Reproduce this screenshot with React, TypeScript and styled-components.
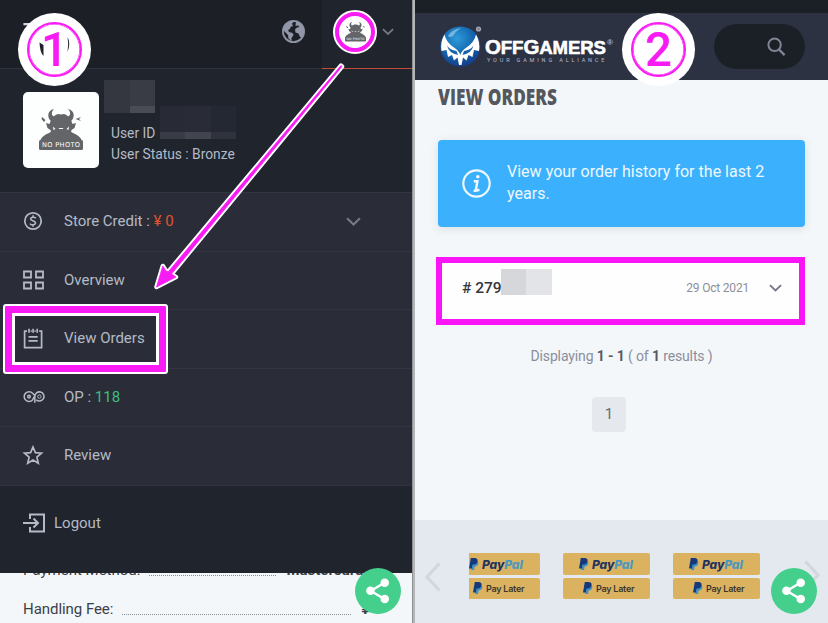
import React from "react";
import styled, { createGlobalStyle } from "styled-components";

const Global = createGlobalStyle`
  * { box-sizing: border-box; }
  body { margin: 0; font-family: Roboto, "Liberation Sans", sans-serif; overflow: hidden; }
  svg { display: block; flex: none; }
`;

const Stage = styled.div`
  position: relative;
  display: flex;
  width: 828px;
  height: 623px;
  overflow: hidden;
  background: #f4f7f9;
`;
const MenuPanel = styled.section`
  width: 412px;
  height: 623px;
  display: flex;
  flex-direction: column;
  background: #20242d;
  color: #b4bac6;
  overflow: hidden;
`;
const Divider = styled.div`
  width: 3px;
  background: linear-gradient(90deg, #77787c, #b4b5b7 40%, #b4b5b7);
`;
const OrdersPanel = styled.section`
  width: 413px;
  display: flex;
  flex-direction: column;
  background: #f4f7f9;
`;

/* ---------- account menu ---------- */
const MenuHeader = styled.header`
  height: 69px;
  flex: none;
  display: flex;
  justify-content: flex-end;
  background: #1c2026;
  border-bottom: 1px solid #2f333b;
`;
const MenuLetter = styled.span`
  margin: 19px auto 0 23px;
  font-size: 20px;
  font-weight: 700;
  color: #d5d7db;
`;
const GlobeSlot = styled.div`
  padding: 19px 16px 0 0;
`;
const AccountTab = styled.div`
  width: 90px;
  height: 69px;
  background: #20242d;
  border-bottom: 1.5px solid #c14e38;
  display: flex;
  align-items: flex-start;
`;
const AvatarRing = styled.div`
  width: 44px;
  height: 44px;
  margin: 10px 5px 0 11px;
  border-radius: 50%;
  border: 2px solid #fff;
  background: #f91bf3;
  padding: 4px;
`;
const AvatarDisc = styled.div`
  width: 32px;
  height: 32px;
  border-radius: 50%;
  background: #fff;
  display: flex;
  align-items: center;
  justify-content: center;
`;
const TabArrow = styled.div`
  margin-top: 28px;
`;
const Profile = styled.div`
  height: 123px;
  flex: none;
  display: flex;
  padding: 11px 0 0 23px;
`;
const PhotoCard = styled.div`
  width: 76px;
  height: 76px;
  margin-top: 12px;
  border-radius: 5px;
  background: #fdfefe;
  padding: 17px 0 0 16px;
`;
const ProfileText = styled.div`
  margin-left: 5px;
`;
const Mosaic = styled.div<{ $cols: string; $rows: string }>`
  display: inline-grid;
  grid-template-columns: ${(p) => p.$cols};
  grid-template-rows: ${(p) => p.$rows};
`;
const Tile = styled.span<{ $c: string }>`
  background: ${(p) => p.$c};
`;
const UserLine = styled.div`
  display: flex;
  height: 33px;
  margin: -7px 0 0 7px;
`;
const Label = styled.span<{ $size?: number; $ls?: number }>`
  font-size: ${(p) => p.$size ?? 15}px;
  letter-spacing: ${(p) => p.$ls ?? 0}px;
  line-height: 20px;
  white-space: nowrap;
`;
const UserIdLabel = styled(Label)`
  margin-top: 17px;
  width: 49px;
`;
const UserStatus = styled.div`
  margin: 5px 0 0 7px;
  line-height: 20px;
`;
const MenuRow = styled.div`
  height: 58.5px;
  flex: none;
  display: flex;
  align-items: center;
  padding: 0 51px 1px 22px;
  background: #2a2d38;
  border-top: 1px solid #313541;
`;
const RowIcon = styled.div`
  width: 42px;
`;
const Spacer = styled.div`
  flex: 1;
`;
const Red = styled.span`
  color: #e2512f;
`;
const Green = styled.span`
  color: #3fbd80;
`;
const LogoutRow = styled.div`
  height: 88px;
  flex: none;
  display: flex;
  align-items: center;
  padding: 0 0 12px 23px;
  gap: 8px;
  border-top: 1px solid #303440;
`;
const Receipt = styled.div`
  flex: 1;
  background: #f4f7f9;
  color: #3b3f48;
  padding: 0 0 0 23px;
  overflow: hidden;
`;
const ReceiptRow = styled.div<{ $gap: string }>`
  display: flex;
  align-items: flex-end;
  height: 20px;
  margin-top: ${(p) => p.$gap};
`;
const Leader = styled.span<{ $w: number; $ml: number }>`
  width: ${(p) => p.$w}px;
  flex: none;
  margin: 0 10px 4px ${(p) => p.$ml}px;
  border-bottom: 1px dotted #8b9097;
`;

/* ---------- orders page ---------- */
const StatusBar = styled.div`
  height: 13px;
  flex: none;
  background: #1b2026;
`;
const BrandBar = styled.header`
  height: 67px;
  flex: none;
  display: flex;
  align-items: flex-start;
  background: #2d3243;
  padding: 11px 23px 0 25px;
`;
const BrandText = styled.div`
  margin: 13px 0 0 2px;
  width: 132px;
  color: #fff;
  white-space: nowrap;
`;
const BrandName = styled.div`
  font-family: "Liberation Sans", sans-serif;
  font-weight: 700;
  font-size: 18.6px;
  line-height: 20px;
  height: 20px;
  display: flex;
  align-items: baseline;
  letter-spacing: -0.1px;
  -webkit-text-stroke: 0.6px #fff;
`;
const BigCap = styled.span`
  font-size: 20.5px;
`;
const Reg = styled.span`
  font-size: 8px;
  margin-left: 1px;
  align-self: flex-start;
  line-height: 11px;
  color: #b7bcc8;
  -webkit-text-stroke: 0;
`;
const Tagline = styled.div`
  margin-left: 2px;
  font-size: 5.5px;
  letter-spacing: 2.85px;
  line-height: 7px;
  color: #b7bcc8;
`;
const SearchPill = styled.div`
  width: 91px;
  height: 45px;
  margin-left: auto;
  border-radius: 23px;
  background: #1b2026;
  padding: 13px 0 0 53px;
`;
const Title = styled.h1`
  margin: 3px 0 0 23px;
  height: 28px;
  font: 800 23.5px/27px "Open Sans", sans-serif;
  color: #54585e;
  transform: scaleX(0.733);
  transform-origin: 0 0;
  white-space: nowrap;
`;
const Notice = styled.div`
  width: 367px;
  height: 87px;
  margin: 29px 0 0 23px;
  border-radius: 4px;
  background: #3bb1fd;
  box-shadow: 0 2px 8px rgba(60, 80, 100, 0.14);
  color: #eff8ff;
  display: flex;
  padding: 21px 0 0 24px;
`;
const NoticeIcon = styled.div`
  padding-top: 8px;
  width: 45px;
`;
const NoticeText = styled.p`
  margin: 0;
  width: 275px;
  font-size: 16px;
  line-height: 22px;
  letter-spacing: 0.02px;
`;
const OrderCard = styled.div`
  width: 369px;
  height: 68px;
  margin: 30px 0 0 21px;
  border: 6px solid #f915f5;
  background: #fefefe;
  display: flex;
  padding: 6px 17px 0 20px;
`;
const OrderNo = styled.span`
  font-size: 15.5px;
  line-height: 38px;
  font-weight: 500;
  color: #33363c;
  width: 39px;
  white-space: nowrap;
`;
const OrderDate = styled.span`
  margin-left: auto;
  font-size: 12px;
  letter-spacing: -0.2px;
  line-height: 38px;
  color: #8b8f99;
`;
const OrderChevron = styled.div`
  padding: 15px 0 0 20px;
`;
const Summary = styled.div`
  margin-top: 21px;
  text-align: center;
  font-size: 14px;
  letter-spacing: -0.13px;
  line-height: 20px;
  color: #8a8e9c;
  b { color: #565b66; font-weight: 700; }
`;
const Page = styled.div`
  width: 34px;
  height: 35px;
  margin: 31px 0 0 177px;
  border-radius: 4px;
  background: #e5e9ee;
  color: #666b73;
  text-align: center;
  font-size: 15px;
  line-height: 34px;
`;
const Payments = styled.footer`
  height: 103px;
  margin-top: auto;
  background: #e4e8ef;
  display: flex;
  padding: 33px 0 0 10px;
`;
const Carousel = styled.div`
  display: flex;
  gap: 23px;
  margin-left: 28px;
`;
const PayStack = styled.div<{ $w: number }>`
  width: ${(p) => p.$w}px;
  display: flex;
  flex-direction: column;
  align-items: flex-end;
  overflow: hidden;
  gap: 3px;
`;
const PayTile = styled.div`
  width: 87px;
  height: 21.5px;
  flex: none;
  border-radius: 2px;
  background: #dbb360;
  display: flex;
  align-items: center;
`;
const PayPalWord = styled.span`
  margin: 2px 0 0 3px;
  font: italic 800 12px/16px Inter, sans-serif;
  letter-spacing: -0.1px;
  color: #24345e;
  i { color: #4b97c0; }
`;
const PayLaterWord = styled.span`
  margin: 1px 0 0 3px;
  font: 600 9px/14px Inter, sans-serif;
  letter-spacing: -0.25px;
  color: #3b372f;
`;
const MarkSlot = styled.span<{ $x: number }>`
  margin-left: ${(p) => p.$x}px;
`;
const PrevSlot = styled.div`
  padding-top: 9px;
  width: 16px;
`;
const NextSlot = styled.div`
  padding: 7px 0 0 44px;
`;

/* ---------- annotations over both screens ---------- */
const Step = styled.div<{ $x: number }>`
  position: absolute;
  left: ${(p) => p.$x}px;
  top: 13px;
  width: 73px;
  height: 73px;
  border-radius: 50%;
  background: #fff;
  display: grid;
  place-items: center;
`;
const StepRing = styled.div`
  position: relative;
  width: 55px;
  height: 55px;
  border: 2px solid #f91bf3;
  box-shadow: inset 0 0 0 0.6px #f91bf3;
  border-radius: 50%;
  color: #f91bf3;
  text-align: center;
  font: 500 47.5px/52px Roboto, sans-serif;
`;
const StepHole = styled.svg`
  position: absolute;
  left: 0;
  top: 0;
`;
const ShareButton = styled.div<{ $x: number }>`
  position: absolute;
  left: ${(p) => p.$x}px;
  top: 568px;
  width: 46px;
  height: 46px;
  border-radius: 50%;
  background: #45cf8c;
  display: grid;
  place-items: center;
`;
const Marker = styled.div`
  position: absolute;
  left: 3px;
  top: 304px;
  width: 165px;
  height: 70px;
  border: 2.5px solid #fff;
  border-radius: 3px;
  box-shadow: inset 0 0 0 7px #f91bf3, inset 0 0 0 10px #fff;
`;
const ArrowLayer = styled.svg`
  position: absolute;
  left: 140px;
  top: 50px;
  pointer-events: none;
`;

const Monster = ({ w }: { w: number }) => (
  <svg width={w} height={(w * 41) / 44} viewBox="0 0 44 41">
    <g fill="#646568">
      <path d="M15 0C8 1 8 9 12 12L17 8C13 8 11 4 15 0ZM29 0c7 1 7 9 3 12l-5-4c4 0 6-4 2-8Z" />
      <path d="M12 11Q15 6 19 5L22 5.5 25 5Q29 6 32 11L33.500 15 37 14 35.500 19 32.500 21Q32 25 28 27H16Q12 25 11.500 21L8.500 19 7 14 10.500 15Z" />
      <path d="M3 8 6.500 11 5 13 2.500 10ZM36.500 10 42 8 40 10 42 12Z" />
      <path d="M14 22C8 25 1 27 1 34H43C43 27 36 25 30 22Z" />
      <rect x="0" y="31" width="44" height="10" rx="1.500" />
    </g>
    <path d="M14 17.500l2.500 2.500-2 1ZM30 17.500l-2.500 2.500 2 1ZM19.500 19h5l-1 1h-3Z" fill="#fff" />
    <text x="3" y="38.400" fontFamily="DejaVu Sans, sans-serif" fontSize="6.600" fill="#fff" textLength="38">NO PHOTO</text>
  </svg>
);

const Chevron = ({ c, w = 14 }: { c: string; w?: number }) => (
  <svg width={w} height={w * 0.6} viewBox="0 0 14 8.4" fill="none" stroke={c} strokeWidth="2">
    <path d="M1 1.2 7 7 13 1.2" />
  </svg>
);

const Globe = () => (
  <svg width="25" height="25" viewBox="0 0 25 25">
    <circle cx="12.5" cy="12.5" r="10.6" fill="#1c2026" stroke="#8e94a6" strokeWidth="1.8" />
    <path d="M3 8Q6 3 11 2L14 2 11 4.500 12 7 9.500 8 9 10 7 11 8 13 11.500 14 12.500 16 10.500 19 10.500 22 7.500 19.500 7 16 3 12ZM15 2 20 4.500 22.500 8 23 13 21 18 19 18 17.500 14.500 14.500 13.500 14 10.500 16 8.500 18.500 8 17 6.500 14.500 7Z" fill="#9297a8" />
  </svg>
);

const iconProps = { fill: "none", stroke: "#b4bac6", strokeWidth: 1.8 };
const CoinIcon = () => (
  <svg width="22" height="20" viewBox="0 0 22 20" {...iconProps}>
    <circle cx="11" cy="10" r="8.2" strokeWidth="1.7" />
    <path d="M13.8 7.2C13 6 9 5.6 8.6 7.8 8.3 10 13.6 9.5 13.5 12 13.3 14.4 9 14.3 8 12.6M11 4.3V6M11 14V15.7" strokeWidth="1.6" />
  </svg>
);
const GridIcon = () => (
  <svg width="23" height="20" viewBox="0 0 23 20" {...iconProps}>
    <path d="M2 1.5H9V7.5H2ZM14 1.5H21V7.5H14ZM2 12.5H9V18.5H2ZM14 12.5H21V18.5H14Z" />
  </svg>
);
const OrdersIcon = () => (
  <svg width="22" height="21" viewBox="0 0 22 21" {...iconProps} strokeWidth="1.7">
    <path d="M5 3.2H2.6V19.6H19.6V3.2H17.2M8.7 3.2H9.8M12.5 3.2H13.6M7 .8V4.8M11.1 .8V4.8M15.2 .8V4.8M6.5 8.8H15.7M6.5 12.8H15.7" />
  </svg>
);
const PointsIcon = () => (
  <svg width="24" height="14" viewBox="0 0 24 14" {...iconProps} strokeWidth="1.5">
    <path d="M10.600 10A4.900 4.900 0 1 1 10.600 3.200L12.400 5M12.800 12.800V6.600A4.600 4.600 0 1 1 14.200 9.800M13.500 4.500 10.400 10.200" />
    <circle cx="7" cy="6.600" r="1.300" />
    <circle cx="17.400" cy="6.600" r="1.700" strokeWidth="1" />
  </svg>
);
const StarIcon = () => (
  <svg width="22" height="20" viewBox="0 0 22 20" {...iconProps}>
    <path d="M11 2 13.4 7.6 19.5 8.1 14.9 12.1 16.3 18.2 11 15 5.7 18.2 7.1 12.1 2.5 8.1 8.6 7.6Z" strokeWidth="1.7" />
  </svg>
);
const LogoutIcon = () => (
  <svg width="23" height="20" viewBox="0 0 23 20" {...iconProps} strokeWidth="2">
    <path d="M7 6V1.5H21V18.5H7V14M0 10H15M10.5 5.5 15 10 10.5 14.5" />
  </svg>
);

const BrandBall = () => (
  <svg width="43" height="43" viewBox="0 0 43 43">
    <defs>
      <radialGradient id="ball" cx=".42" cy=".3" r=".7">
        <stop offset="0" stopColor="#2f9bd8" />
        <stop offset=".5" stopColor="#156db5" />
        <stop offset="1" stopColor="#123f8c" />
      </radialGradient>
    </defs>
    <circle cx="20.3" cy="22.5" r="20" fill="url(#ball)" />
    <path d="M8 12Q12 5 21 4 16 7 13 12 10 14 8 12Z" fill="#a9d6f1" opacity=".6" />
    <path d="M4.500 10.500Q6 18 14 23.500 18.500 26 20.300 31 22 26 26.500 23.500 34.500 18 36 10.500 40.500 18 39 27L34 26 32.500 33 28.500 31 26.500 36.500 23 33.500 21.500 41H19L17.500 33.500 14 36.500 12 31 8 33 6.500 26 1.500 27Q0 18 4.500 10.500Z" fill="#fff" />
    <path d="M7 21.500Q10 26 16.500 27L18 31Q9 29.500 7 21.500ZM33.500 21.500Q30.500 26 24 27L22.500 31Q31.500 29.500 33.500 21.500Z" fill="#1963ad" />
    <circle cx="38.5" cy="5" r="2.6" fill="#a5a9b5" />
    <circle cx="38.5" cy="5" r="1.2" fill="#777c8d" />
  </svg>
);

const PayMark = () => (
  <svg width="10" height="12" viewBox="0 0 10 12">
    <path d="M3.4 3H8Q10 4 9 6.5 8.2 8.6 5.6 8.6L5 12H2.2Z" fill="#3b8fc4" />
    <path d="M1.8 0H6Q9.4.4 8.4 3.8 7.6 6.6 4.4 6.6H3.4L2.8 10.4H0Z" fill="#17397a" />
  </svg>
);

const PayOption = ({ w }: { w: number }) => (
  <PayStack $w={w}>
    <PayTile>
      <MarkSlot $x={16}><PayMark /></MarkSlot>
      <PayPalWord>Pay<i>Pal</i></PayPalWord>
    </PayTile>
    <PayTile>
      <MarkSlot $x={20}><PayMark /></MarkSlot>
      <PayLaterWord>Pay Later</PayLaterWord>
    </PayTile>
  </PayStack>
);

const Share = ({ x }: { x: number }) => (
  <ShareButton $x={x}>
    <svg width="24" height="26" viewBox="0 0 26 28" fill="#fff">
      <path d="M20 5 5 14 20 22.5" fill="none" stroke="#fff" strokeWidth="2.6" />
      <circle cx="20.3" cy="5" r="4.6" />
      <circle cx="4.8" cy="13.8" r="4.6" />
      <circle cx="20.3" cy="22.6" r="4.6" />
    </svg>
  </ShareButton>
);

const rows = [
  { icon: <CoinIcon />, label: <>Store Credit : <Red>¥ 0</Red></>, arrow: true },
  { icon: <GridIcon />, label: "Overview" },
  { icon: <OrdersIcon />, label: "View Orders" },
  { icon: <PointsIcon />, label: <>OP : <Green>118</Green></> },
  { icon: <StarIcon />, label: "Review" },
];

const arrowShape =
  "M342 66.500 171.500 274 176 277 156.500 287 162.800 266 166 271 168.500 271.500 340.900 65.600Z";

export default function App() {
  return (
    <>
      <Global />
      <Stage>
        <MenuPanel>
          <MenuHeader>
            <MenuLetter>T</MenuLetter>
            <GlobeSlot><Globe /></GlobeSlot>
            <AccountTab>
              <AvatarRing><AvatarDisc><Monster w={21} /></AvatarDisc></AvatarRing>
              <TabArrow><Chevron c="#737987" w={12} /></TabArrow>
            </AccountTab>
          </MenuHeader>
          <Profile>
            <PhotoCard><Monster w={44} /></PhotoCard>
            <ProfileText>
              <Mosaic $cols="26px 25px" $rows="26px 7px">
                <Tile $c="#343740" /><Tile $c="#393c45" />
                <Tile $c="#343740" /><Tile $c="#494c54" />
              </Mosaic>
              <UserLine>
                <UserIdLabel $size={13.8}>User ID</UserIdLabel>
                <Mosaic $cols="25px 26px 25px" $rows="26px 7px">
                  <Tile $c="#282b36" /><Tile $c="#292c37" /><Tile $c="#242832" />
                  <Tile $c="#393c46" /><Tile $c="#42454f" /><Tile $c="#30333d" />
                </Mosaic>
              </UserLine>
              <UserStatus><Label $size={13.8}>User Status : Bronze</Label></UserStatus>
            </ProfileText>
          </Profile>
          {rows.map((r, i) => (
            <MenuRow key={i}>
              <RowIcon>{r.icon}</RowIcon>
              <Label>{r.label}</Label>
              <Spacer />
              {r.arrow && <Chevron c="#747a86" w={15} />}
            </MenuRow>
          ))}
          <LogoutRow>
            <LogoutIcon />
            <Label>Logout</Label>
          </LogoutRow>
          <Receipt>
            <ReceiptRow $gap="-13px">
              <Label>Payment Method:</Label>
              <Leader $w={127} $ml={9} />
              <Label><b>Mastercard</b></Label>
            </ReceiptRow>
            <ReceiptRow $gap="19px">
              <Label $ls={-0.05}>Handling Fee:</Label>
              <Leader $w={229} $ml={9} />
              <Label><b>¥ 1</b></Label>
            </ReceiptRow>
          </Receipt>
        </MenuPanel>
        <Divider />
        <OrdersPanel>
          <StatusBar />
          <BrandBar>
            <BrandBall />
            <BrandText>
              <BrandName><BigCap>O</BigCap>FF<BigCap>G</BigCap>AMERS<Reg>®</Reg></BrandName>
              <Tagline>YOUR GAMING ALLIANCE</Tagline>
            </BrandText>
            <SearchPill>
              <svg width="19" height="20" viewBox="0 0 19 20" fill="none" stroke="#7f8595" strokeWidth="2">
                <circle cx="7.6" cy="7.8" r="6.2" />
                <path d="M12 12.5 17.6 18.2" strokeWidth="2.4" />
              </svg>
            </SearchPill>
          </BrandBar>
          <Title>VIEW ORDERS</Title>
          <Notice>
            <NoticeIcon>
              <svg width="29" height="29" viewBox="0 0 29 29" fill="none" stroke="#eff8ff">
                <circle cx="14.5" cy="14.5" r="13.2" strokeWidth="2.2" />
                <path d="M11.8 12.2H15.4L13.8 21.2M11.6 21.8Q14.5 22.2 17.4 20.6" strokeWidth="2.4" />
                <circle cx="15.8" cy="7.8" r="1.8" fill="#eff8ff" stroke="none" />
              </svg>
            </NoticeIcon>
            <NoticeText>View your order history for the last 2 years.</NoticeText>
          </Notice>
          <OrderCard>
            <OrderNo># 279</OrderNo>
            <Mosaic $cols="25px 26px" $rows="26px">
              <Tile $c="#d6d7db" /><Tile $c="#e3e4e7" />
            </Mosaic>
            <OrderDate>29 Oct 2021</OrderDate>
            <OrderChevron><Chevron c="#737883" w={13} /></OrderChevron>
          </OrderCard>
          <Summary>Displaying <b>1 - 1</b> ( of <b>1</b> results )</Summary>
          <Page>1</Page>
          <Payments>
            <PrevSlot>
              <svg width="16" height="30" viewBox="0 0 16 30" fill="none" stroke="#d2d6dd" strokeWidth="3.2"><path d="M14.5 1.5 2 15 14.5 28.5" /></svg>
            </PrevSlot>
            <Carousel>
              <PayOption w={71} />
              <PayOption w={87} />
              <PayOption w={87} />
            </Carousel>
            <NextSlot>
              <svg width="16" height="30" viewBox="0 0 16 30" fill="none" stroke="#d2d6dd" strokeWidth="3.2"><path d="M1.5 1.5 14 15 1.5 28.5" /></svg>
            </NextSlot>
          </Payments>
        </OrdersPanel>

        <Share x={355} />
        <Share x={771} />
        <Marker />
        <ArrowLayer width="220" height="260" viewBox="140 50 220 260">
          <path d={arrowShape} fill="#fff" stroke="#fff" strokeWidth="4.500" strokeLinejoin="round" />
          <path d={arrowShape} fill="#f91bf3" stroke="#f91bf3" strokeWidth=".8" />
        </ArrowLayer>
        <Step $x={18}>
          <StepRing>
            1
            <StepHole width="50" height="50" viewBox="0 0 50 50">
              <path d="M10.5 18.500 14.5 21V32Q11 29 10.5 18.500ZM38.5 13Q42 19 38.5 28 40 20 38.5 13Z" fill="#20242a" />
            </StepHole>
          </StepRing>
        </Step>
        <Step $x={622}><StepRing>2</StepRing></Step>
      </Stage>
    </>
  );
}
